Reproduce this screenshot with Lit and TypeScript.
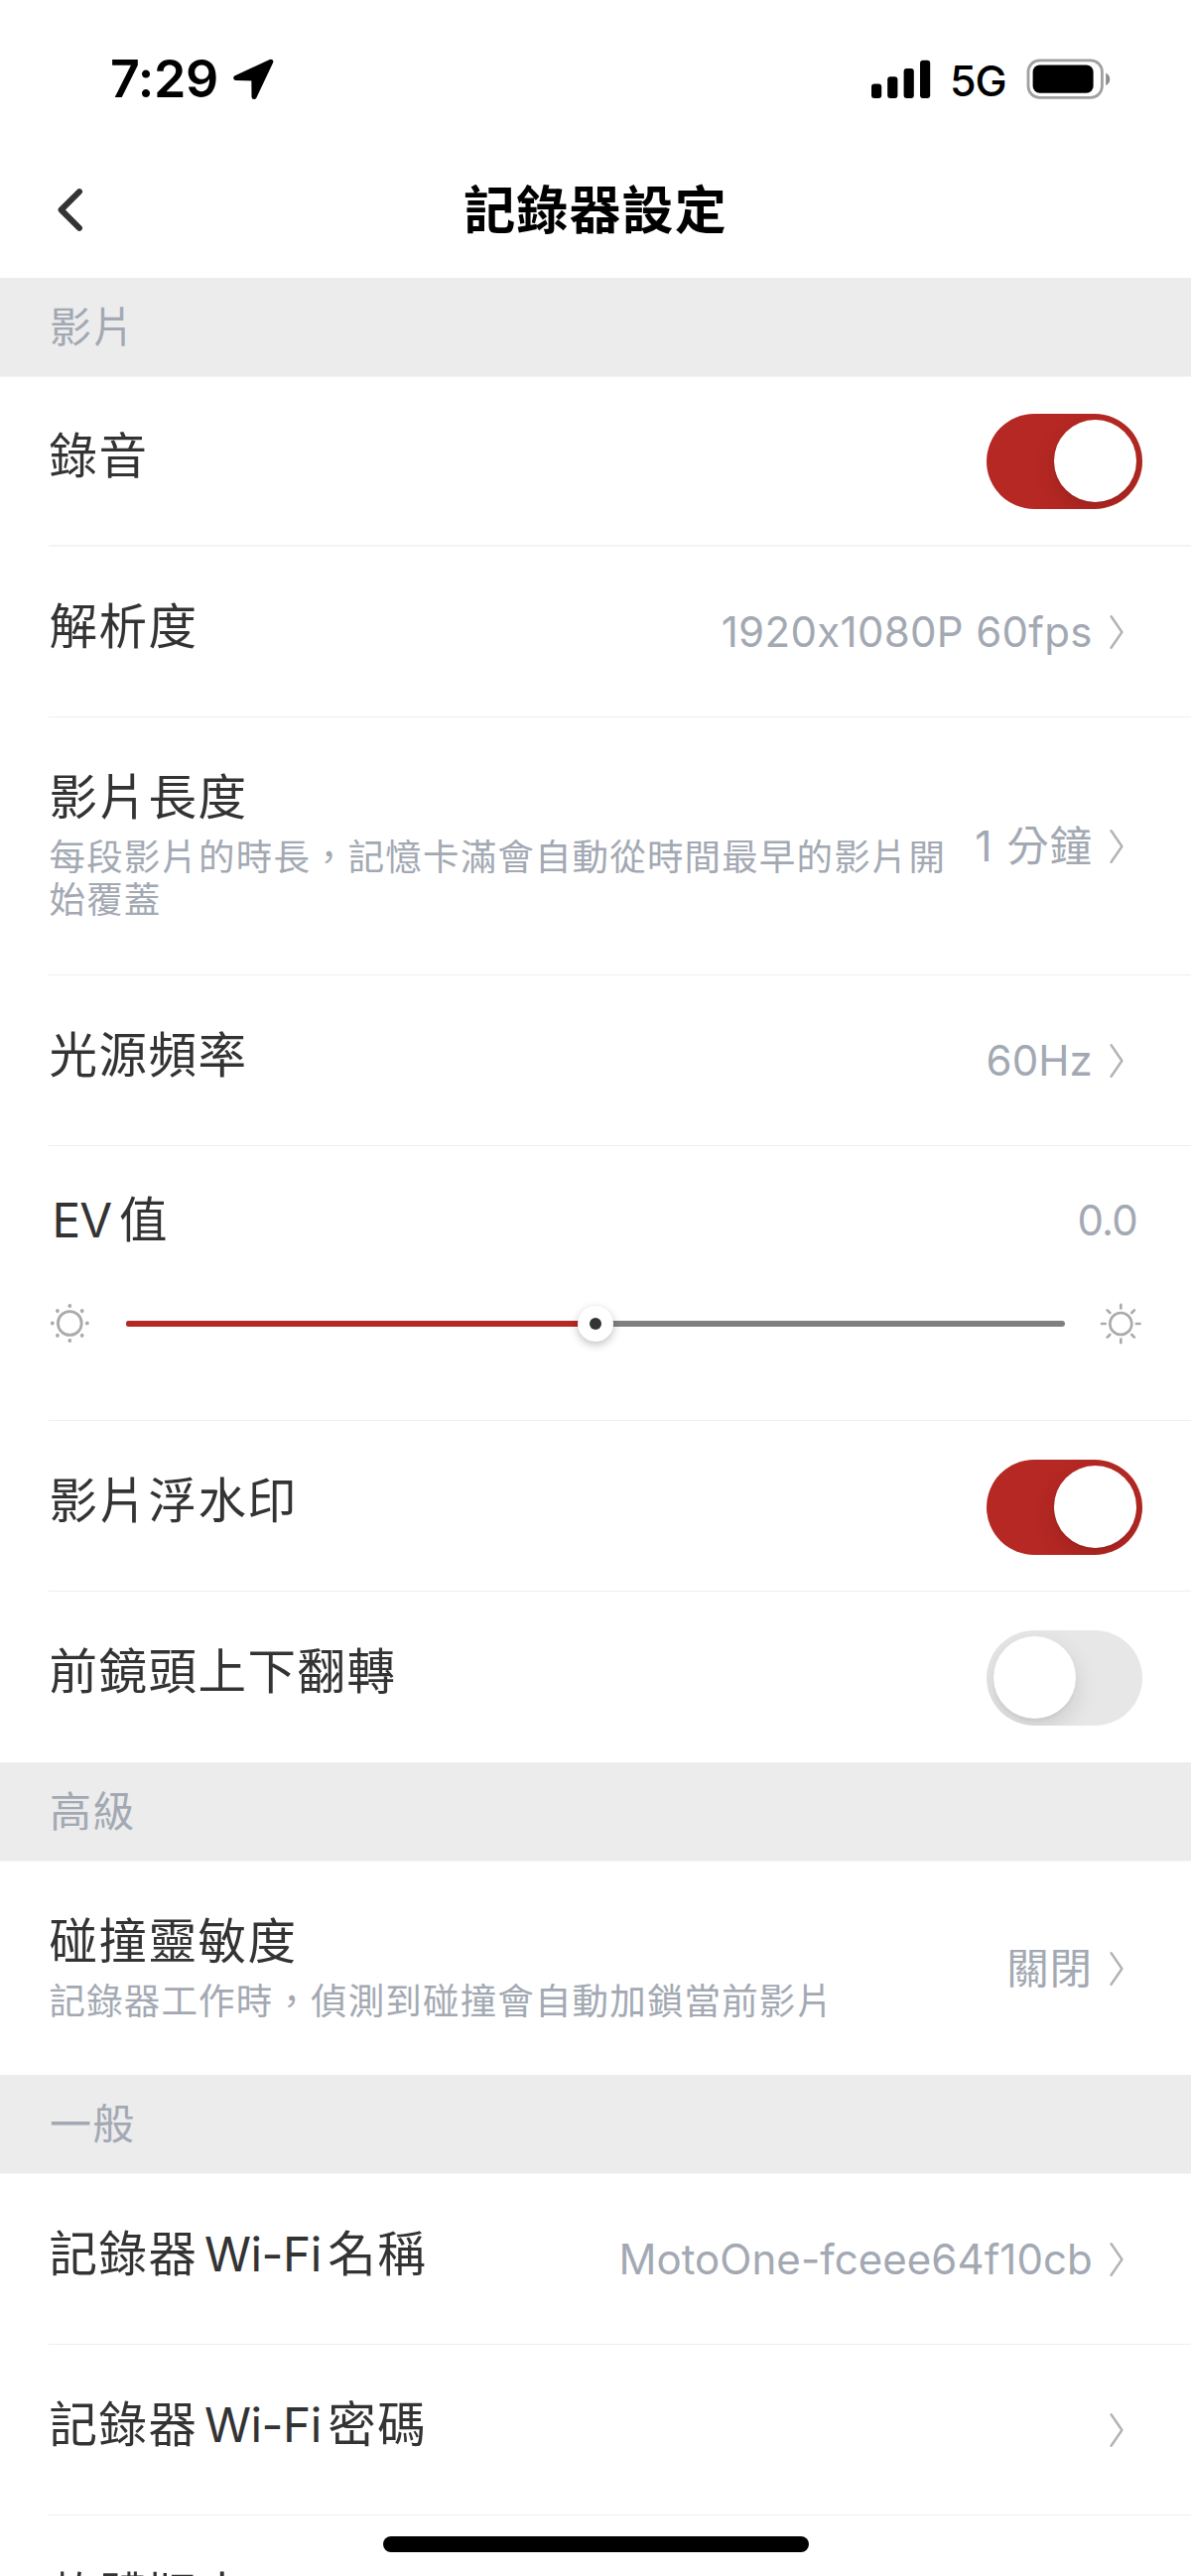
import { LitElement, html, css, svg, nothing } from "lit";
import { customElement, property } from "lit/decorators.js";
import { classMap } from "lit/directives/class-map.js";

type Row = {
  label: string;
  note?: string;
  value?: string;
  toggle?: boolean;
  tall?: string;
};

const VIDEO: Row[] = [
  { label: "錄音", toggle: true, tall: "first" },
  { label: "解析度", value: "1920x1080P 60fps" },
  {
    label: "影片長度",
    note: "每段影片的時長，記憶卡滿會自動從時間最早的影片開始覆蓋",
    value: "1 分鐘",
    tall: "two-line",
  },
  { label: "光源頻率", value: "60Hz" },
];

const VIDEO_AFTER_EV: Row[] = [
  { label: "影片浮水印", toggle: true },
  { label: "前鏡頭上下翻轉", toggle: false, tall: "last" },
];

const ADVANCED: Row[] = [
  {
    label: "碰撞靈敏度",
    note: "記錄器工作時，偵測到碰撞會自動加鎖當前影片",
    value: "關閉",
    tall: "one-note",
  },
];

const GENERAL: Row[] = [
  { label: "記錄器Wi-Fi名稱", value: "MotoOne-fceee64f10cb" },
  { label: "記錄器Wi-Fi密碼", value: "" },
  { label: "軟體版本", value: "" },
];

/* Wraps the Latin runs of a mixed label so they get their own spacing. */
const mixed = (text: string) =>
  text
    .split(/([A-Za-z-]+)/)
    .filter((part) => part)
    .map((part) =>
      /[A-Za-z]/.test(part) ? html`<span class="latin">${part}</span>` : part
    );

@customElement("toggle-switch")
class ToggleSwitch extends LitElement {
  @property({ type: Boolean }) on = false;

  static styles = css`
    :host {
      display: block;
      flex: none;
    }
    .track {
      display: flex;
      box-sizing: border-box;
      width: 157px;
      height: 96px;
      padding: 6px 6.5px;
      border-radius: 48px;
      background: #e7e7e8;
      overflow: hidden;
    }
    .on {
      justify-content: flex-end;
      background: #b62823;
    }
    .knob {
      width: 83px;
      height: 83px;
      border-radius: 50%;
      background: #fff;
      box-shadow: 0 9px 24px rgba(0, 0, 0, 0.12), 0 3px 3px rgba(0, 0, 0, 0.04);
    }
  `;

  render() {
    return html`<div class=${classMap({ track: true, on: this.on })}>
      <div class="knob"></div>
    </div>`;
  }
}

@customElement("settings-row")
class SettingsRow extends LitElement {
  @property({ attribute: false }) row!: Row;

  static styles = css`
    :host {
      display: block;
    }
    .row {
      display: flex;
      box-sizing: border-box;
      height: 172px;
      margin-left: 49px;
      border-bottom: 1px solid #efeff1;
    }
    .first {
      height: 171px;
      border-bottom: 2px solid #f4f4f5;
    }
    .two-line {
      height: 260px;
    }
    .one-note {
      height: 215px;
      border-bottom: none;
    }
    .last {
      border-bottom: none;
    }
    .text {
      flex: 1;
      min-width: 0;
      padding-top: 51px;
      padding-left: 0.5px;
    }
    .first .text {
      padding-top: 50px;
    }
    .label {
      font-size: 48.5px;
      line-height: 60px;
      letter-spacing: 1.5px;
      color: #333;
      white-space: nowrap;
    }
    .latin {
      font-size: 47.7px;
      letter-spacing: -0.5px;
      margin: 0 6.5px 0 6.5px;
    }
    .note {
      max-width: 915px;
      margin-top: 9px;
      font-size: 36.5px;
      line-height: 43px;
      letter-spacing: 1.15px;
      color: #a3a9b3;
    }
    .end {
      display: flex;
      align-items: center;
      flex: none;
      padding-right: 68px;
      padding-top: 1px;
      gap: 18px;
    }
    .switch {
      padding-right: 49px;
      padding-top: 2px;
    }
    .first .switch {
      padding-top: 1px;
    }
    .value {
      margin-right: -0.8px;
      font-size: 42px;
      line-height: 50px;
      letter-spacing: 0.06px;
      color: #a3a9b3;
      white-space: nowrap;
      font-feature-settings: "calt" 0;
    }
    .spaced {
      letter-spacing: 0.33px;
    }
    .cjk {
      font-size: 42.5px;
      letter-spacing: 0.8px;
      word-spacing: 1px;
    }
    .chevron {
      display: block;
      width: 14px;
      height: 36px;
    }
  `;

  render() {
    const r = this.row;
    const isSwitch = r.toggle !== undefined;
    const value = r.value ?? "";
    const cjk = /[\u4e00-\u9fff]/.test(value);
    const spaced = !cjk && value.includes(" ");
    return html`<div class="row ${r.tall ?? ""}">
      <div class="text">
        <div class="label">${mixed(r.label)}</div>
        ${r.note ? html`<div class="note">${r.note}</div>` : nothing}
      </div>
      <div class=${classMap({ end: true, switch: isSwitch })}>
        ${isSwitch
          ? html`<toggle-switch ?on=${r.toggle}></toggle-switch>`
          : html`<span class=${classMap({ value: true, cjk, spaced })}>${value}</span>
              <svg class="chevron" viewBox="0 0 14 36" fill="none" stroke="#b2b2b2" stroke-width="2.4" stroke-linecap="round" stroke-linejoin="round">
                <path d="M1.6 2.2 12.4 18 1.6 33.8" />
              </svg>`}
      </div>
    </div>`;
  }
}

@customElement("ev-slider")
class EvSlider extends LitElement {
  @property({ type: Number }) percent = 50;

  static styles = css`
    :host {
      display: block;
    }
    .block {
      box-sizing: border-box;
      height: 277px;
      margin-left: 49px;
      padding-top: 45px;
      border-bottom: 1px solid #efeff1;
    }
    .head {
      display: flex;
      justify-content: space-between;
      align-items: center;
      padding-right: 54px;
    }
    .label {
      font-size: 48.5px;
      line-height: 60px;
      color: #333;
    }
    .latin {
      font-size: 47.7px;
      letter-spacing: -0.8px;
      margin: 0 7.5px 0 3.5px;
    }
    .value {
      font-size: 42px;
      line-height: 60px;
      letter-spacing: -0.8px;
      color: #a3a9b3;
    }
    .control {
      display: flex;
      align-items: center;
      justify-content: space-between;
      height: 60px;
      margin-top: 44px;
      padding-right: 49px;
    }
    .icon {
      display: block;
      width: 44px;
      height: 44px;
    }
    .track {
      display: flex;
      align-items: center;
      width: 946px;
      height: 6px;
      border-radius: 3px;
      background: #808080;
    }
    .fill {
      height: 6px;
      border-radius: 3px 0 0 3px;
      background: #b62823;
    }
    .knob {
      display: grid;
      place-items: center;
      flex: none;
      width: 36px;
      height: 36px;
      margin-left: -18px;
      border-radius: 50%;
      background: #fff;
      box-shadow: 0 3px 8px rgba(0, 0, 0, 0.25);
    }
    .dot {
      width: 12px;
      height: 12px;
      border-radius: 50%;
      background: #333;
    }
  `;

  private angles = [0, 45, 90, 135, 180, 225, 270, 315];

  render() {
    return html`<div class="block">
      <div class="head">
        <div class="label">${mixed("EV值")}</div>
        <div class="value">0.0</div>
      </div>
      <div class="control">
        <svg class="icon" viewBox="0 0 44 44">
          <circle cx="21.3" cy="21.5" r="11.9" fill="none" stroke="#aaa" stroke-width="2.8" />
          ${this.angles.map(
            (a) => svg`<circle cx="38.8" cy="21.5" r="1.9" fill="#aaa" transform="rotate(${a} 21.3 21.5)" />`
          )}
        </svg>
        <div class="track">
          <div class="fill" style="width:${this.percent}%"></div>
          <div class="knob"><div class="dot"></div></div>
        </div>
        <svg class="icon" viewBox="0 0 44 44" fill="none" stroke="#aaa" stroke-width="2.6" stroke-linecap="round">
          <circle cx="22.3" cy="22" r="11" />
          ${this.angles.map(
            (a) => svg`<path d="M37.8 22h3.8" transform="rotate(${a} 22.3 22)" />`
          )}
        </svg>
      </div>
    </div>`;
  }
}

@customElement("app-root")
class AppRoot extends LitElement {
  static styles = css`
    :host {
      display: block;
      position: relative;
      width: 1200px;
      height: 2596px;
      overflow: hidden;
      background: #fff;
      font-family: Inter, "Noto Sans CJK TC", sans-serif;
    }
    .status {
      display: flex;
      justify-content: space-between;
      box-sizing: border-box;
      height: 160px;
      padding: 50px 81px 50px 111px;
    }
    .side {
      display: flex;
      align-items: center;
      height: 60px;
    }
    .time {
      width: 124px;
      font-size: 52px;
      line-height: 60px;
      font-weight: 600;
      letter-spacing: -0.4px;
      color: #000;
    }
    .glyph {
      display: block;
      flex: none;
    }
    .network {
      box-sizing: border-box;
      width: 94px;
      padding: 2px 0 0 18px;
      font-size: 43px;
      line-height: 60px;
      font-weight: 500;
      letter-spacing: -1px;
    }
    .nav {
      display: grid;
      grid-template-columns: 200px 1fr 200px;
      align-items: center;
      height: 106px;
      margin-bottom: 14px;
    }
    .back {
      display: block;
      margin-left: 55px;
    }
    .title {
      margin: 0;
      font-size: 52px;
      line-height: 64px;
      font-weight: 600;
      letter-spacing: 1.1px;
      text-align: center;
      color: #000;
    }
    .section {
      box-sizing: border-box;
      height: 100px;
      margin: 0;
      padding: 0 50px;
      font-size: 42px;
      font-weight: 400;
      line-height: 100px;
      letter-spacing: 1.2px;
      color: #a3a9b3;
      background: #ececed;
      border-bottom: 1px solid #f4f4f5;
    }
    .home {
      position: absolute;
      left: 386px;
      top: 2556px;
      width: 429px;
      height: 15.5px;
      border-radius: 8px;
      background: #000;
    }
  `;

  private rows(list: Row[]) {
    return list.map((row) => html`<settings-row .row=${row}></settings-row>`);
  }

  render() {
    return html`
      <div lang="zh-Hant">
        <div class="status">
          <div class="side">
            <span class="time">7:29</span>
            <svg class="glyph" width="41" height="42" viewBox="0 0 41 42">
              <path d="M37.8 3.2 2.8 19.6 20.8 20 21 38.6Z" fill="#000" stroke="#000" stroke-width="5" stroke-linejoin="round" />
            </svg>
          </div>
          <div class="side">
            <svg class="glyph" width="62" height="40" viewBox="0 0 62 40">
              <rect x="1" y="24.5" width="10.2" height="14.5" rx="3" />
              <rect x="17.2" y="17.2" width="10.2" height="21.8" rx="3" />
              <rect x="33.6" y="9" width="10.2" height="30" rx="3" />
              <rect x="50" y="0.7" width="10.2" height="38.3" rx="3" />
            </svg>
            <span class="network">5G</span>
            <svg class="glyph" width="86" height="42" viewBox="0 0 86 42">
              <rect x="3" y="1.9" width="74.4" height="37.4" rx="11.5" fill="none" stroke="#a0a0a0" stroke-width="2.8" />
              <rect x="7.6" y="6.4" width="61" height="28.4" rx="7" />
              <path d="M81.2 14.4c5.4 2.4 5.4 10.2 0 12.6Z" fill="#8c8c8c" />
            </svg>
          </div>
        </div>
        <div class="nav">
          <svg class="back" width="32" height="48" viewBox="0 0 32 48" fill="none" stroke="#333" stroke-width="6" stroke-linecap="round" stroke-linejoin="round">
            <path d="M25 4.2 6.6 22.5 25 40.8" />
          </svg>
          <h1 class="title">記錄器設定</h1>
        </div>
        <h2 class="section">影片</h2>
        ${this.rows(VIDEO)}
        <ev-slider></ev-slider>
        ${this.rows(VIDEO_AFTER_EV)}
        <h2 class="section">高級</h2>
        ${this.rows(ADVANCED)}
        <h2 class="section">一般</h2>
        ${this.rows(GENERAL)}
      </div>
      <div class="home"></div>
    `;
  }
}
